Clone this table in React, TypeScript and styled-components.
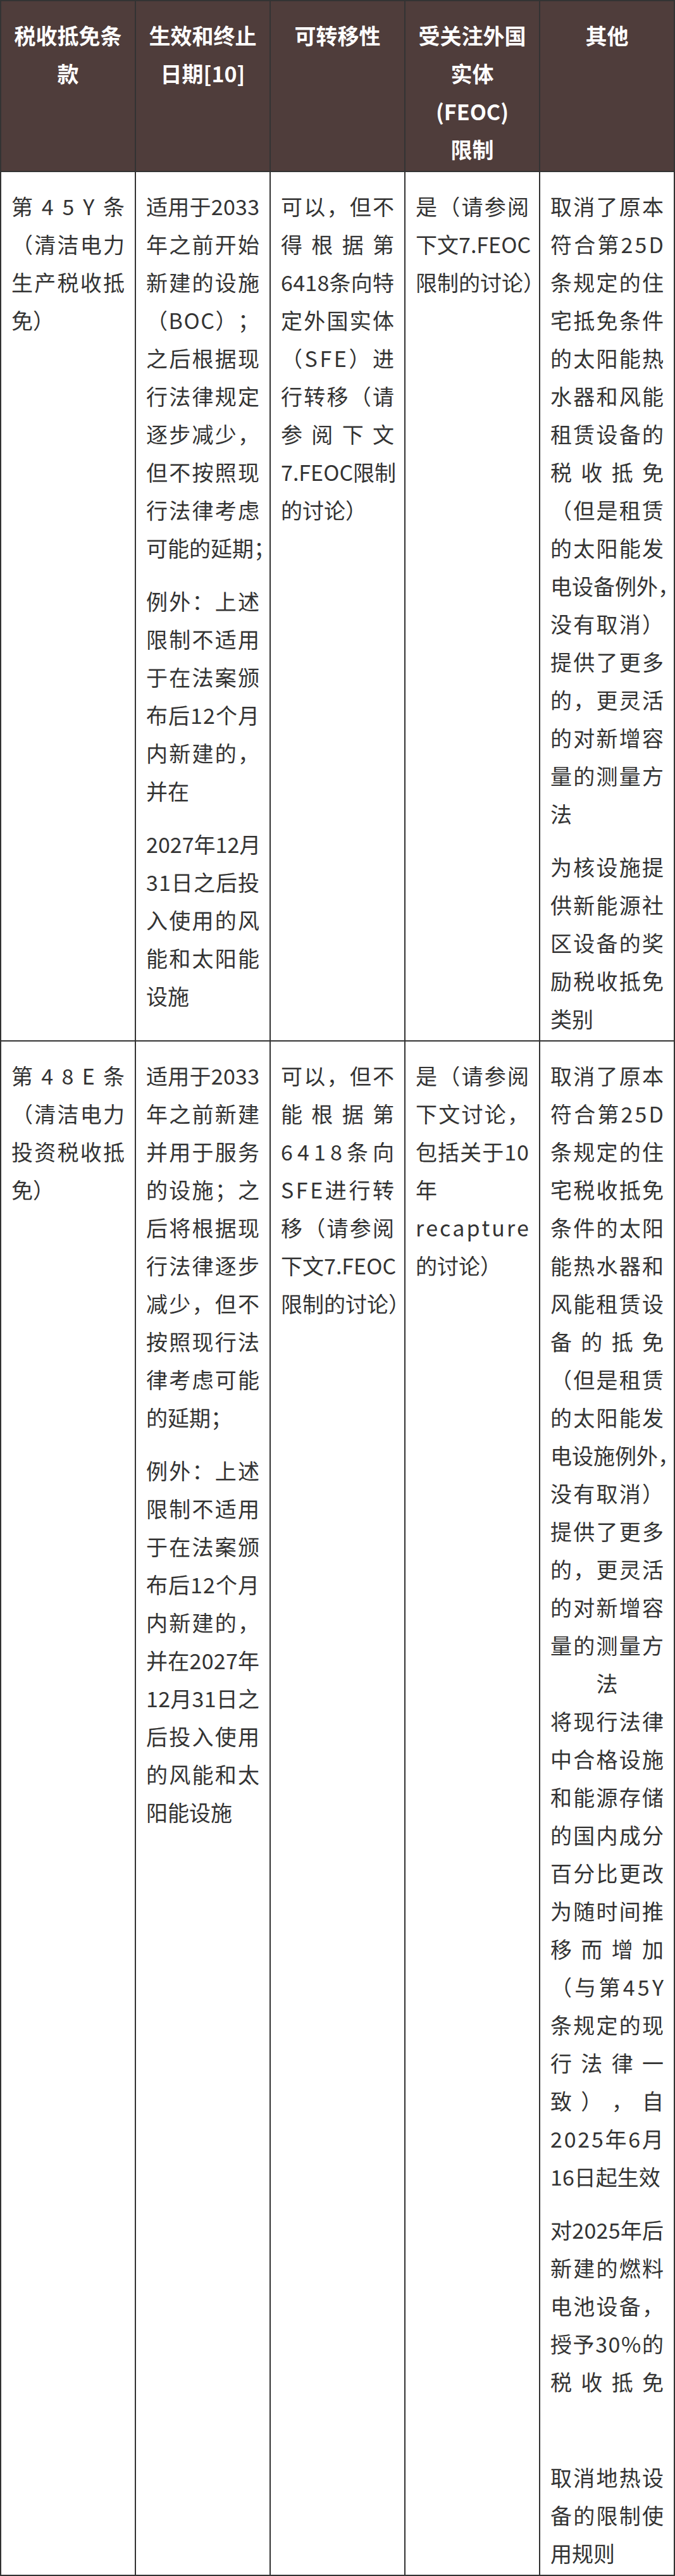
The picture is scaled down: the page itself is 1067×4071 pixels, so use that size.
import React from 'react';
import styled, { createGlobalStyle } from 'styled-components';

const GlobalStyle = createGlobalStyle`
  html, body {
    margin: 0;
    padding: 0;
    background: #ffffff;
  }
  body {
    font-family: "Noto Sans CJK SC", "Noto Sans", sans-serif;
  }
`;

const Table = styled.table`
  width: 1067px;
  table-layout: fixed;
  border-collapse: separate;
  border-spacing: 0;
  border-top: 2px solid #333333;
  border-left: 2px solid #333333;
`;

const HeadCell = styled.th`
  background: #4f3d3b;
  color: #ffffff;
  font-weight: 700;
  font-size: 34px;
  padding: 0 16px 4px;
  border-right: 2px solid #333333;
  border-bottom: 2px solid #333333;
  vertical-align: top;
`;

const BodyCell = styled.td`
  color: #333333;
  font-weight: 400;
  font-size: 34px;
  padding: 0 16px 4px;
  border-right: 2px solid #333333;
  border-bottom: 2px solid #333333;
  vertical-align: top;
`;

const Para = styled.div<{ $gap: number }>`
  margin-top: ${(p) => p.$gap}px;
`;

type Align = 'between' | 'start' | 'center';

const Line = styled.div<{ $align: Align }>`
  display: flex;
  justify-content: ${(p) =>
    p.$align === 'between' ? 'space-between' : p.$align === 'center' ? 'center' : 'flex-start'};
  height: 60px;
  line-height: 60px;
  white-space: nowrap;
`;

const Glyph = styled.span`
  flex: none;
`;

type L = string | { t: string; a: 'center' };
type CellData = { paras: L[][]; gaps?: number[] };

const header: string[][] = [
  ['税收抵免条', '款'],
  ['生效和终止', '日期[10]'],
  ['可转移性'],
  ['受关注外国', '实体', '(FEOC)', '限制'],
  ['其他'],
];

const rows: CellData[][] = [
  [
    { paras: [['第45Y条', '（清洁电力', '生产税收抵', '免）']] },
    {
      paras: [
        ['适用于2033', '年之前开始', '新建的设施', '（BOC）；', '之后根据现', '行法律规定', '逐步减少，', '但不按照现', '行法律考虑', '可能的延期；'],
        ['例外：上述', '限制不适用', '于在法案颁', '布后12个月', '内新建的，', '并在'],
        ['2027年12月', '31日之后投', '入使用的风', '能和太阳能', '设施'],
      ],
    },
    {
      paras: [
        ['可以，但不', '得根据第', '6418条向特', '定外国实体', '（SFE）进', '行转移（请', '参阅下文', '7.FEOC限制', '的讨论）'],
      ],
    },
    { paras: [['是（请参阅', '下文7.FEOC', '限制的讨论）']] },
    {
      paras: [
        ['取消了原本', '符合第25D', '条规定的住', '宅抵免条件', '的太阳能热', '水器和风能', '租赁设备的', '税收抵免', '（但是租赁', '的太阳能发', '电设备例外，', '没有取消）', '提供了更多', '的，更灵活', '的对新增容', '量的测量方', '法'],
        ['为核设施提', '供新能源社', '区设备的奖', '励税收抵免', '类别'],
      ],
    },
  ],
  [
    { paras: [['第48E条', '（清洁电力', '投资税收抵', '免）']] },
    {
      paras: [
        ['适用于2033', '年之前新建', '并用于服务', '的设施；之', '后将根据现', '行法律逐步', '减少，但不', '按照现行法', '律考虑可能', '的延期；'],
        ['例外：上述', '限制不适用', '于在法案颁', '布后12个月', '内新建的，', '并在2027年', '12月31日之', '后投入使用', '的风能和太', '阳能设施'],
      ],
    },
    {
      paras: [['可以，但不', '能根据第', '6418条向', 'SFE进行转', '移（请参阅', '下文7.FEOC', '限制的讨论）']],
    },
    { paras: [['是（请参阅', '下文讨论，', '包括关于10', '年', 'recapture', '的讨论）']] },
    {
      paras: [
        ['取消了原本', '符合第25D', '条规定的住', '宅税收抵免', '条件的太阳', '能热水器和', '风能租赁设', '备的抵免', '（但是租赁', '的太阳能发', '电设施例外，', '没有取消）', '提供了更多', '的，更灵活', '的对新增容', '量的测量方', { t: '法', a: 'center' }, '将现行法律', '中合格设施', '和能源存储', '的国内成分', '百分比更改', '为随时间推', '移而增加', '（与第45Y', '条规定的现', '行法律一', '致），自', '2025年6月', '16日起生效'],
        ['对2025年后', '新建的燃料', '电池设备，', '授予30%的', '税收抵免', ''],
        ['取消地热设', '备的限制使', '用规则'],
      ],
      gaps: [24, 24, 31],
    },
  ],
];

function renderLine(line: L, isLast: boolean, key: number) {
  const text = typeof line === 'string' ? line : line.t;
  const align: Align = typeof line !== 'string' ? line.a : isLast ? 'start' : 'between';
  return (
    <Line key={key} $align={align}>
      {Array.from(text).map((ch, i) => (
        <Glyph key={i}>{ch}</Glyph>
      ))}
    </Line>
  );
}

function Cell({ data }: { data: CellData }) {
  return (
    <BodyCell>
      {data.paras.map((para, pi) => (
        <Para key={pi} $gap={data.gaps ? data.gaps[pi] : 24}>
          {para.map((line, li) => renderLine(line, li === para.length - 1, li))}
        </Para>
      ))}
    </BodyCell>
  );
}

export default function App() {
  return (
    <>
      <GlobalStyle />
      <Table>
        <thead>
          <tr>
            {header.map((lines, i) => (
              <HeadCell key={i}>
                <Para $gap={24}>
                  {lines.map((l, li) => (
                    <Line key={li} $align="center">
                      {l}
                    </Line>
                  ))}
                </Para>
              </HeadCell>
            ))}
          </tr>
        </thead>
        <tbody>
          {rows.map((row, ri) => (
            <tr key={ri}>
              {row.map((cell, ci) => (
                <Cell key={ci} data={cell} />
              ))}
            </tr>
          ))}
        </tbody>
      </Table>
    </>
  );
}
